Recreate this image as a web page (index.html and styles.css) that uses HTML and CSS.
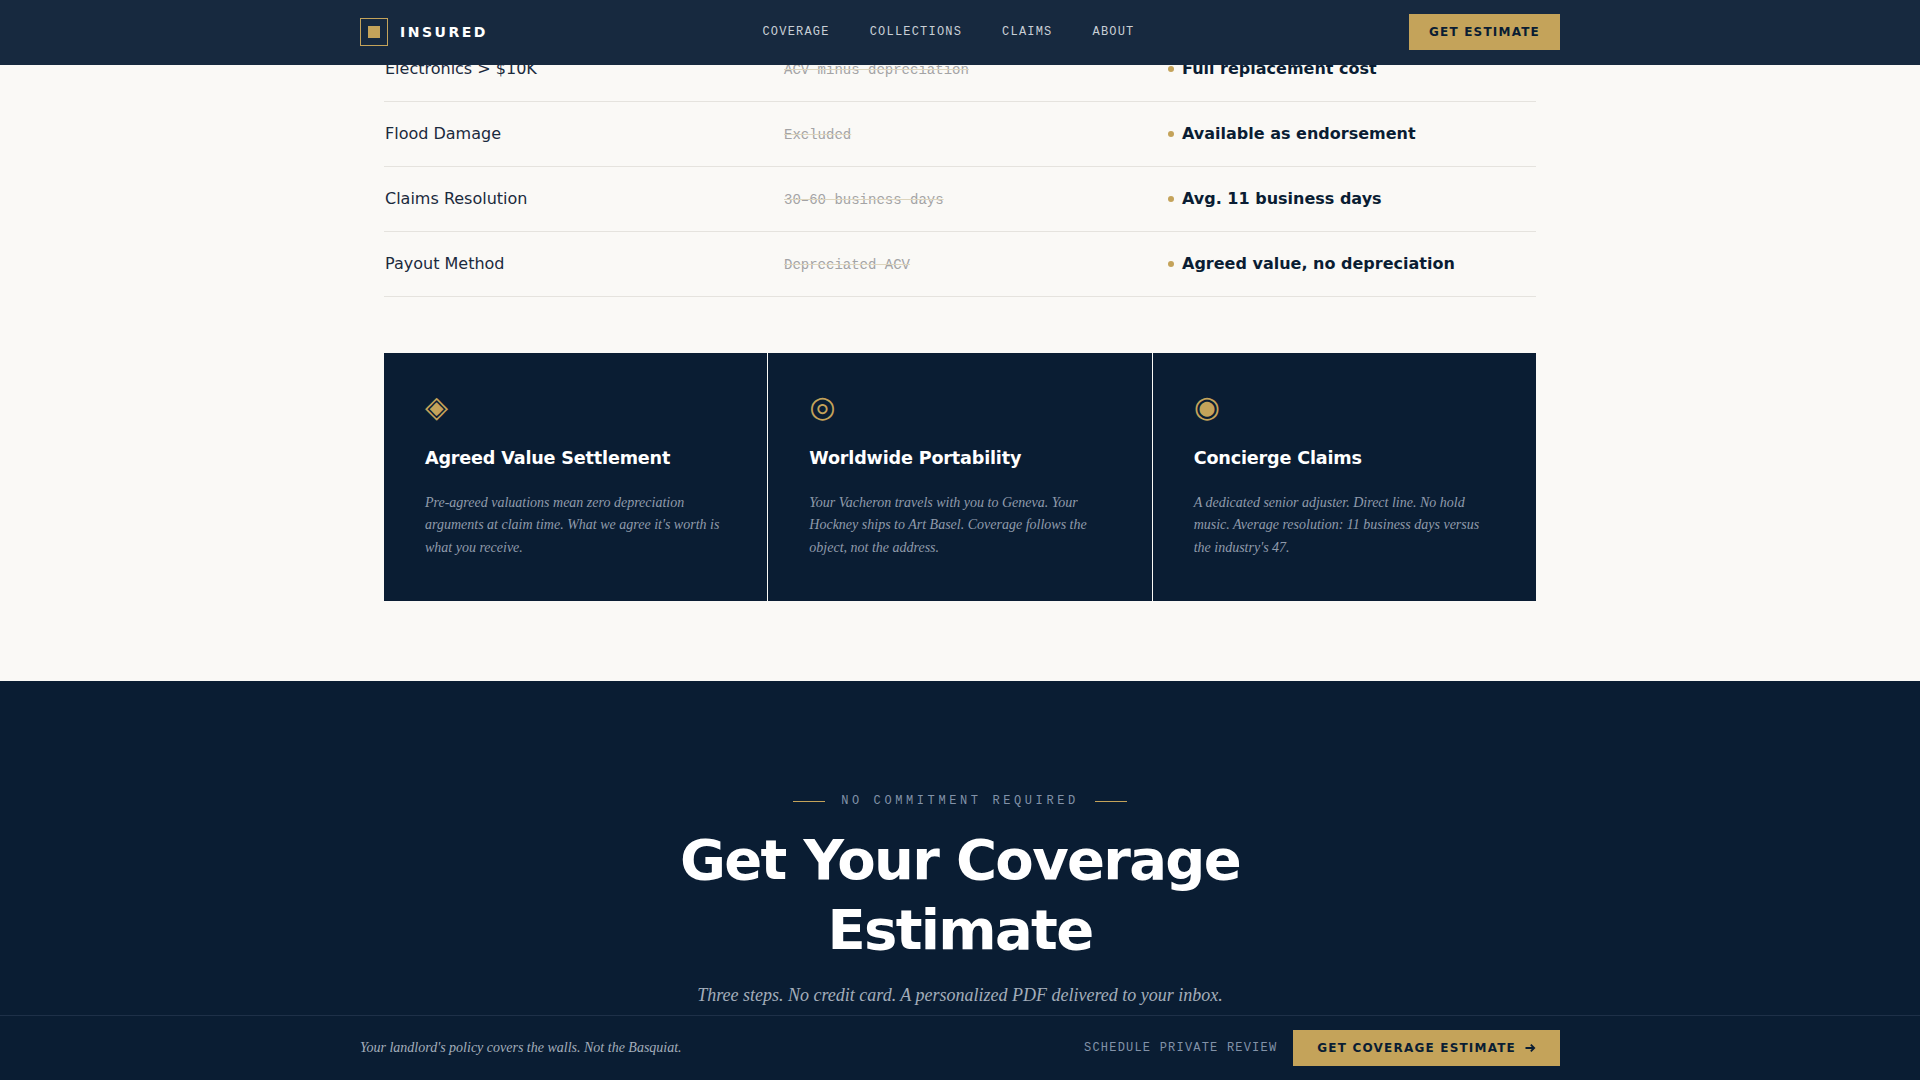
FILE: index.html
```html
<!DOCTYPE html>
<html lang="en">
<head>
    <meta charset="UTF-8">
    <meta name="viewport" content="width=device-width, initial-scale=1.0">
    <title>Insured</title>
    <link rel="stylesheet" href="styles.css">
</head>
<body>
    <nav class="nav">
        <div class="nav-inner">
            <a class="logo" href="#">
                <span class="logo-mark"><span class="logo-dot"></span></span>
                <span class="logo-text">INSURED</span>
            </a>
            <div class="nav-links">
                <a href="#">COVERAGE</a>
                <a href="#">COLLECTIONS</a>
                <a href="#">CLAIMS</a>
                <a href="#">ABOUT</a>
            </div>
            <a class="btn nav-btn" href="#">GET ESTIMATE</a>
        </div>
    </nav>

    <main>
        <section class="compare">
            <div class="compare-table">
                <div class="row">
                    <span class="row-label">Electronics &gt; $10K</span>
                    <span class="row-old">ACV minus depreciation</span>
                    <span class="row-new">Full replacement cost</span>
                </div>
                <div class="row">
                    <span class="row-label">Flood Damage</span>
                    <span class="row-old">Excluded</span>
                    <span class="row-new">Available as endorsement</span>
                </div>
                <div class="row">
                    <span class="row-label">Claims Resolution</span>
                    <span class="row-old">30–60 business days</span>
                    <span class="row-new">Avg. 11 business days</span>
                </div>
                <div class="row">
                    <span class="row-label">Payout Method</span>
                    <span class="row-old">Depreciated ACV</span>
                    <span class="row-new">Agreed value, no depreciation</span>
                </div>
            </div>

            <div class="features">
                <div class="feature">
                    <div class="feature-icon">◈</div>
                    <h3>Agreed Value Settlement</h3>
                    <p>Pre-agreed valuations mean zero depreciation arguments at claim time. What we agree it's worth is what you receive.</p>
                </div>
                <div class="feature">
                    <div class="feature-icon">◎</div>
                    <h3>Worldwide Portability</h3>
                    <p>Your Vacheron travels with you to Geneva. Your Hockney ships to Art Basel. Coverage follows the object, not the address.</p>
                </div>
                <div class="feature">
                    <div class="feature-icon">◉</div>
                    <h3>Concierge Claims</h3>
                    <p>A dedicated senior adjuster. Direct line. No hold music. Average resolution: 11 business days versus the industry's 47.</p>
                </div>
            </div>
        </section>

        <section class="estimate">
            <div class="eyebrow">NO COMMITMENT REQUIRED</div>
            <h2>Get Your Coverage<br>Estimate</h2>
            <p class="estimate-sub">Three steps. No credit card. A personalized PDF delivered to your inbox.</p>
        </section>
    </main>

    <div class="bottom-bar">
        <div class="bottom-inner">
            <p class="bottom-note">Your landlord's policy covers the walls. Not the Basquiat.</p>
            <div class="bottom-actions">
                <a class="bottom-link" href="#">SCHEDULE PRIVATE REVIEW</a>
                <a class="btn bottom-btn" href="#">
                    <span>GET COVERAGE ESTIMATE</span>
                    <svg class="arrow" width="12" height="10" viewBox="0 0 12 10" fill="none" stroke="currentColor" stroke-width="1.8">
                        <path d="M1.5 5H10M6.8 1.6L10.2 5L6.8 8.4"/>
                    </svg>
                </a>
            </div>
        </div>
    </div>
</body>
</html>
```

FILE: styles.css
```css
:root {
    --navy: #0a1d33;
    --nav-bg: #17293f;
    --gold: #c4a35a;
    --cream: #faf9f6;
    --ink: #0a1d33;
    --line: #e5e3de;
    --sans: "DejaVu Sans", sans-serif;
    --serif: "Liberation Serif", serif;
    --mono: "Liberation Mono", monospace;
}

* {
    box-sizing: border-box;
    margin: 0;
    padding: 0;
}

html, body {
    height: 100%;
    overflow: hidden;
}

body {
    font-family: var(--sans);
    background-color: var(--cream);
    color: var(--ink);
}

a {
    text-decoration: none;
    color: inherit;
}

.nav {
    position: fixed;
    top: 0;
    left: 0;
    right: 0;
    height: 65px;
    background-color: var(--nav-bg);
    border-bottom: 1px solid var(--nav-bg);
    z-index: 10;
}

.nav-inner {
    max-width: 1200px;
    height: 100%;
    margin: 0 auto;
    display: flex;
    align-items: center;
    justify-content: space-between;
}

.logo {
    display: flex;
    align-items: center;
    gap: 12px;
}

.logo-mark {
    width: 28px;
    height: 28px;
    border: 1px solid var(--gold);
    display: flex;
    align-items: center;
    justify-content: center;
}

.logo-dot {
    width: 12px;
    height: 12px;
    background-color: var(--gold);
}

.logo-text {
    font-size: 14px;
    font-weight: 700;
    letter-spacing: 0.18em;
    color: #fff;
}

.nav-links {
    display: flex;
    gap: 40px;
    font-family: var(--mono);
    font-size: 12px;
    letter-spacing: 0.1em;
    color: #c9cfd6;
}

.btn {
    display: inline-flex;
    align-items: center;
    background-color: var(--gold);
    color: var(--ink);
    font-weight: 700;
    white-space: nowrap;
}

.nav-btn {
    padding: 11px 20px;
    font-size: 12px;
    line-height: 14px;
    letter-spacing: 0.1em;
}

.compare {
    max-width: 1200px;
    margin: 0 auto;
    padding: 37px 24px 80px;
}

.row {
    display: grid;
    grid-template-columns: 400px 384px 1fr;
    align-items: center;
    height: 65px;
    border-bottom: 1px solid var(--line);
}

.row-label {
    font-size: 16px;
    color: #1a2a3d;
    padding: 0 0 2px 1px;
}

.row-old {
    font-family: var(--mono);
    font-size: 14px;
    color: #a3a3a5;
    text-decoration: line-through;
    text-decoration-color: #ddd5bd;
    padding-top: 2px;
}

.row-new {
    display: flex;
    align-items: center;
    gap: 8px;
    font-size: 16px;
    font-weight: 700;
    padding-bottom: 2px;
}

.row-new::before {
    content: "";
    width: 6px;
    height: 6px;
    margin-top: 2px;
    border-radius: 50%;
    background-color: var(--gold);
}

.features {
    display: grid;
    grid-template-columns: repeat(3, 1fr);
    gap: 1px;
    margin-top: 56px;
}

.feature {
    background-color: var(--navy);
    padding: 40px 41px;
    height: 248px;
}

.feature-icon {
    font-size: 30px;
    line-height: 27px;
    color: var(--gold);
    margin-bottom: 24px;
}

.feature h3 {
    font-size: 17.6px;
    font-weight: 700;
    line-height: 28px;
    letter-spacing: -0.01em;
    color: #fff;
    margin-bottom: 20px;
}

.feature p {
    font-family: var(--serif);
    font-style: italic;
    font-size: 14px;
    line-height: 22.4px;
    color: #909bab;
}

.estimate {
    background-color: var(--navy);
    padding: 113px 24px 0;
    height: 400px;
    text-align: center;
}

.eyebrow {
    display: flex;
    align-items: center;
    justify-content: center;
    gap: 16px;
    font-family: var(--mono);
    font-size: 12px;
    letter-spacing: 0.3em;
    color: #8292a8;
    margin-bottom: 17px;
}

.eyebrow::before,
.eyebrow::after {
    content: "";
    width: 32px;
    height: 1px;
    background-color: var(--gold);
}

.estimate h2 {
    font-size: 56px;
    font-weight: 700;
    line-height: 70px;
    letter-spacing: -0.03em;
    color: #fff;
    margin-bottom: 20px;
}

.estimate-sub {
    font-family: var(--serif);
    font-style: italic;
    font-size: 18px;
    color: #a3adba;
}

.bottom-bar {
    position: fixed;
    left: 0;
    right: 0;
    bottom: 0;
    height: 65px;
    background-color: var(--navy);
    border-top: 1px solid #1e3048;
    z-index: 10;
}

.bottom-inner {
    max-width: 1200px;
    height: 100%;
    margin: 0 auto;
    display: flex;
    align-items: center;
    justify-content: space-between;
}

.bottom-note {
    font-family: var(--serif);
    font-style: italic;
    font-size: 14px;
    color: #a3adba;
}

.bottom-actions {
    display: flex;
    align-items: center;
    gap: 16px;
}

.bottom-link {
    font-family: var(--mono);
    font-size: 12px;
    letter-spacing: 0.1em;
    color: #8292a8;
}

.bottom-btn {
    gap: 8px;
    padding: 11px 24px;
    font-size: 12px;
    line-height: 14px;
    letter-spacing: 0.1em;
}
```
